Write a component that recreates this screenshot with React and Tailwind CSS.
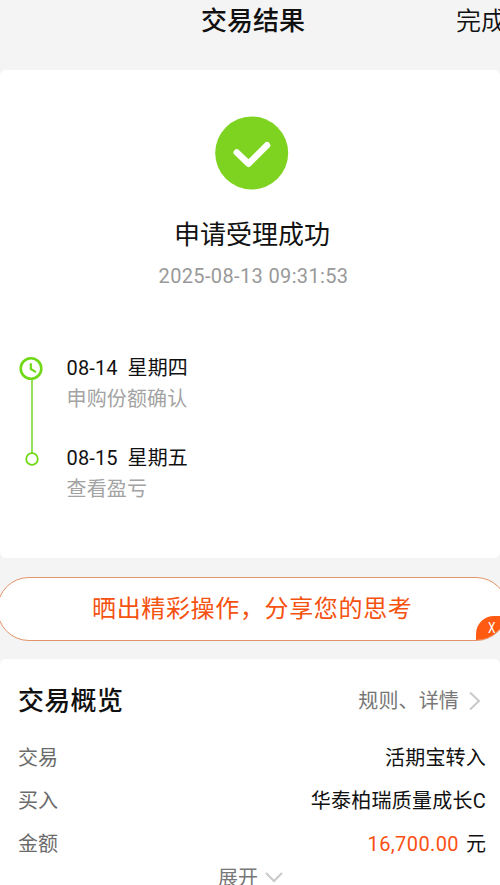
import React from 'react';

const steps = [
  { date: '08-14', day: '星期四', text: '申购份额确认' },
  { date: '08-15', day: '星期五', text: '查看盈亏' },
];

const Header = () => (
  <header className="grid h-[70px] w-[506px] grid-cols-3 bg-[#f4f4f4]">
    <h1 className="col-start-2 h-10 text-center text-[26px] leading-[43px] font-medium">交易结果</h1>
    <button className="h-[43px] text-right text-[25px] leading-[43px] font-[350]">完成</button>
  </header>
);

const ResultCard = () => (
  <section className="h-[488px] rounded-md bg-white pt-[46px]">
    <div className="flex w-[504px] flex-col items-center">
      <svg className="h-[74px] w-[74px]" viewBox="0 0 74 74" fill="none">
        <circle cx="36.7" cy="37" r="36.5" fill="#7ed321" />
        <path d="M21.8 36.5 33.5 47.7 52 29.3" stroke="white" strokeWidth="6.5" strokeLinecap="round" strokeLinejoin="round" />
      </svg>
      <h2 className="mt-[26px] text-[26px] leading-[38px]">申请受理成功</h2>
      <p className="mt-[7px] pl-[3px] text-[20px] leading-[30px] tracking-[0.36px] text-[#999]">2025-08-13 09:31:53</p>
    </div>

    <div className="mt-[61px] flex pl-[18px]">
      <svg className="h-[116px] w-[28px] shrink-0" viewBox="0 0 28 116" fill="none" stroke="#70d916">
        <circle cx="13" cy="16.5" r="10.3" strokeWidth="2.6" />
        <path d="M12.8 12v5l4.4 2.6" strokeWidth="2.2" strokeLinecap="round" strokeLinejoin="round" />
        <path d="M14 28v73" stroke="#8cdd48" strokeWidth="1.8" />
        <circle cx="14" cy="107" r="5.8" strokeWidth="1.8" />
      </svg>
      <div className="mt-px ml-[20.5px] flex flex-col gap-[30px]">
        {steps.map((step) => (
          <div key={step.date} className="text-[20px] leading-[30px] tracking-[0.15px]">
            <div className="flex">
              <span className="w-[61px]">{step.date}</span>
              <span>{step.day}</span>
            </div>
            <div className="pt-px text-[#a3a3a3] -mb-px">{step.text}</div>
          </div>
        ))}
      </div>
    </div>
  </section>
);

const ShareBanner = () => (
  <div className="my-[18px] -ml-[3px] h-[65px] w-[511px] pt-px">
    <div className="relative h-[64px] overflow-hidden rounded-full border border-[#e2936c] bg-white">
      <p className="pl-[94px] text-[24px] leading-[62px] tracking-[0.65px] text-[#f5510f]">晒出精彩操作，分享您的思考</p>
      <button className="absolute right-0 bottom-0 h-[24px] w-[31px] rounded-tl-[18px] bg-[#ff5a12] pl-[12px] text-left text-[14px] leading-[24px] text-white">
        <span className="block origin-left scale-x-85">X</span>
      </button>
    </div>
  </div>
);

const Row = ({ label, children }) => (
  <div className="flex h-[43.3px] items-center justify-between text-[20px] leading-[30px]">
    <span className="text-[#6b6b6b]">{label}</span>
    <span>{children}</span>
  </div>
);

const Overview = () => (
  <section className="h-[226px] rounded-t-md bg-white pr-[14px] pl-[18px]">
    <div className="flex h-[77px] items-center justify-between pt-[7px]">
      <h2 className="text-[26px] leading-[38px] font-medium tracking-[0.3px]">交易概览</h2>
      <div className="flex items-center text-[20px] tracking-[0.15px] text-[#777]">
        规则、详情
        <svg className="ml-[9px] h-[20px] w-[18px]" viewBox="0 0 18 20" fill="none" stroke="#c9c9c9" strokeWidth="2">
          <path d="m2 1.5 9 8.5-9 8.5" />
        </svg>
      </div>
    </div>
    <Row label="交易"><span className="tracking-[0.2px]">活期宝转入</span></Row>
    <Row label="买入"><span className="tracking-[0.25px]">华泰柏瑞质量成长C</span></Row>
    <Row label="金额">
      <span className="mr-[7px] tracking-[0.4px] text-[#fb5014]">16,700.00</span>元
    </Row>
    <div className="flex h-[19px] items-start justify-center pr-[2px] text-[20px] leading-[30px] text-[#777]">
      <span className="-mt-[3px]">展开</span>
      <svg className="mt-[5px] ml-[6px] h-[12px] w-[20px]" viewBox="0 0 20 12" fill="none" stroke="#c9c9c9" strokeWidth="2">
        <path d="m2 2 8 8 8-8" />
      </svg>
    </div>
  </section>
);

export default function App() {
  return (
    <div className="h-[885px] w-[500px] overflow-hidden bg-[#f4f4f4] font-['Roboto','Noto_Sans_CJK_SC',sans-serif] text-[#111]">
      <Header />
      <ResultCard />
      <ShareBanner />
      <Overview />
    </div>
  );
}
